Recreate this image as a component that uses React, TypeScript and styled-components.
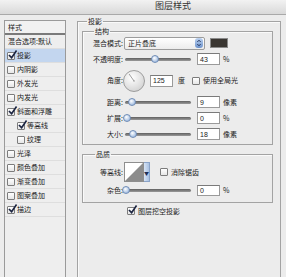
import React from "react";
import styled, { createGlobalStyle } from "styled-components";

const GlobalStyle = createGlobalStyle`
  html, body { margin: 0; padding: 0; background: #ececec; }
  body { font-family: "Noto Sans CJK SC", "Noto Sans", sans-serif; color: #222; }
  * { box-sizing: border-box; }
`;

const Window = styled.div`
  width: 286px;
  height: 277px;
  overflow: hidden;
  background: #ececec;
  display: flex;
  flex-direction: column;
`;

const TitleBar = styled.div`
  height: 15px;
  flex: none;
  display: flex;
  align-items: center;
  justify-content: center;
  padding-left: 60px;
  padding-bottom: 2px;
  font-size: 9px;
  line-height: 10px;
  color: #333;
  background: linear-gradient(#f2f2f2, #d9d9d9);
  border-bottom: 1px solid #a9a9a9;
`;

const Body = styled.div`
  flex: 1;
  display: flex;
  align-items: flex-start;
  padding: 2px 0 0 4px;
`;

const StyleList = styled.div`
  width: 62px;
  height: 270px;
  margin-top: 3px;
  border: 1px solid #9a9a9a;
  background: #eeeeee;
  display: flex;
  flex-direction: column;
`;

const ListHeader = styled.div`
  height: 14px;
  padding-left: 3px;
  font-size: 7px;
  line-height: 12px;
  border-bottom: 2px solid #7a7a7a;
  background: #f1f1f1;
`;

const ListItem = styled.div<{ $selected?: boolean; $indent?: boolean }>`
  height: 14px;
  display: flex;
  align-items: center;
  gap: 2px;
  padding-left: ${(p) => (p.$indent ? 12 : 2)}px;
  font-size: 7px;
  line-height: 9px;
  border-bottom: 1px solid #dedede;
  background: ${(p) => (p.$selected ? "#c3d6ef" : "transparent")};
`;

const BoxOuter = styled.span`
  position: relative;
  width: 8px;
  height: 8px;
  flex: none;
  border: 1px solid #7c7c7c;
  border-radius: 1px;
  background: linear-gradient(#ffffff, #e6e6e6);
`;

const CheckMark = styled.svg`
  position: absolute;
  left: 0px;
  top: -3px;
  width: 9px;
  height: 9px;
  overflow: visible;
`;

const CheckBox: React.FC<{ checked?: boolean }> = ({ checked }) => (
  <BoxOuter>
    {checked && (
      <CheckMark viewBox="0 0 10 10">
        <path d="M1 5.5 L4 8.5 L9.5 0.5" fill="none" stroke="#1b2440" strokeWidth="1.8" />
      </CheckMark>
    )}
  </BoxOuter>
);

const Fieldset = styled.fieldset<{ $w: number; $mt?: number; $pl?: number; $pt?: number; $pb?: number; $h?: number }>`
  width: ${(p) => p.$w}px;
  ${(p) => (p.$h ? `height: ${p.$h}px;` : "")}
  margin: ${(p) => p.$mt ?? 0}px 0 0 0;
  padding: ${(p) => p.$pt ?? 0}px 0 ${(p) => p.$pb ?? 0}px ${(p) => p.$pl ?? 0}px;
  border: 1px solid #a3a3a3;
  box-shadow: inset 1px 1px 0 #fafafa;
  display: flex;
  flex-direction: column;
  flex: none;
`;

const OuterFieldset = styled(Fieldset)`
  margin-left: 11px;
`;

const Legend = styled.legend<{ $ml: number }>`
  margin-left: ${(p) => p.$ml}px;
  padding: 0 1px;
  font-size: 7px;
  line-height: 8px;
  color: #222;
`;

const Row = styled.div<{ $h: number; $mt?: number }>`
  height: ${(p) => p.$h}px;
  margin-top: ${(p) => p.$mt ?? 0}px;
  display: flex;
  align-items: center;
  flex: none;
`;

const Label = styled.span`
  width: 40px;
  flex: none;
  text-align: right;
  font-size: 7px;
  line-height: 9px;
`;

const Text = styled.span<{ $ml?: number }>`
  margin-left: ${(p) => p.$ml ?? 0}px;
  font-size: 7px;
  line-height: 9px;
  white-space: nowrap;
`;

const Select = styled.div`
  width: 81px;
  height: 13px;
  margin-left: 1px;
  display: flex;
  align-items: center;
  justify-content: space-between;
  padding: 0 1px 0 3px;
  border: 1px solid #9c9c9c;
  border-radius: 2px;
  background: linear-gradient(#ffffff, #ececec);
  font-size: 7px;
  line-height: 9px;
`;

const Stepper = styled.svg`
  width: 8px;
  height: 10px;
`;

const Swatch = styled.div`
  width: 18px;
  height: 10px;
  margin-left: 5px;
  background: #3a3632;
  border: 1px solid #8a8a8a;
`;

const Track = styled.div<{ $ml?: number }>`
  position: relative;
  width: 66px;
  height: 3px;
  margin-left: ${(p) => p.$ml ?? 2}px;
  border-radius: 2px;
  background: linear-gradient(#5f5f5f, #9a9a9a);
`;

const Thumb = styled.span`
  position: absolute;
  top: -3px;
  width: 8px;
  height: 8px;
  margin-left: -4px;
  border-radius: 50%;
  border: 1px solid #6f8cb6;
  background: radial-gradient(circle at 40% 35%, #ffffff, #a9c2e4 70%);
`;

const Slider: React.FC<{ pos: number; ml?: number }> = ({ pos, ml }) => (
  <Track $ml={ml}>
    <Thumb style={{ left: pos }} />
  </Track>
);

const NumInput = styled.div<{ $ml?: number; $h?: number }>`
  width: 23px;
  height: ${(p) => p.$h ?? 12}px;
  margin-left: ${(p) => p.$ml ?? 6}px;
  padding-left: 2px;
  display: flex;
  align-items: center;
  border: 1px solid #9a9a9a;
  border-top-color: #7a7a7a;
  background: #ffffff;
  font-family: "Liberation Sans", Arial, sans-serif;
  font-size: 7px;
  line-height: 9px;
`;

const DialSvg = styled.svg`
  width: 22px;
  height: 22px;
  flex: none;
`;

const Dial: React.FC<{ angle: number }> = ({ angle }) => {
  const r = (angle * Math.PI) / 180;
  const x = 11 + Math.cos(r) * 8.5;
  const y = 11 - Math.sin(r) * 8.5;
  return (
    <DialSvg viewBox="0 0 22 22">
      <defs>
        <radialGradient id="dg" cx="40%" cy="35%" r="70%">
          <stop offset="0" stopColor="#ffffff" />
          <stop offset="1" stopColor="#d2d2d2" />
        </radialGradient>
      </defs>
      <circle cx="11" cy="11" r="10.5" fill="url(#dg)" stroke="#8a8a8a" strokeWidth="0.8" />
      <line x1="11" y1="11" x2={x} y2={y} stroke="#777" strokeWidth="0.7" />
      <path d="M10 11 H12 M11 10 V12" stroke="#999" strokeWidth="0.5" />
    </DialSvg>
  );
};

const ContourBox = styled.div`
  display: flex;
  margin-left: 1px;
  height: 20px;
`;

const ContourSvg = styled.svg`
  width: 20px;
  height: 20px;
  border: 1px solid #8e8e8e;
`;

const ContourArrow = styled.div`
  width: 6px;
  height: 20px;
  display: flex;
  align-items: center;
  justify-content: center;
  border: 1px solid #8aa3c8;
  border-left: none;
  background: linear-gradient(90deg, #d7e4f5, #a9c1e2);
  font-size: 5px;
  color: #1f2f55;
`;

const CheckLabel = styled.div<{ $ml?: number; $pl?: number }>`
  display: flex;
  align-items: center;
  gap: 3px;
  margin-left: ${(p) => p.$ml ?? 0}px;
  padding-left: ${(p) => p.$pl ?? 0}px;
`;

const items: { label: string; checked?: boolean; selected?: boolean; indent?: boolean; box?: boolean }[] = [
  { label: "混合选项:默认", box: false },
  { label: "投影", checked: true, selected: true },
  { label: "内阴影" },
  { label: "外发光" },
  { label: "内发光" },
  { label: "斜面和浮雕", checked: true },
  { label: "等高线", checked: true, indent: true },
  { label: "纹理", indent: true },
  { label: "光泽" },
  { label: "颜色叠加" },
  { label: "渐变叠加" },
  { label: "图案叠加" },
  { label: "描边", checked: true },
];

const sliderRows = [
  { label: "距离:", pos: 7, value: "9", unit: "像素" },
  { label: "扩展:", pos: 2, value: "0", unit: "%" },
  { label: "大小:", pos: 8, value: "18", unit: "像素" },
];

export default function App() {
  return (
    <Window>
      <GlobalStyle />
      <TitleBar>图层样式</TitleBar>
      <Body>
        <StyleList>
          <ListHeader>样式</ListHeader>
          {items.map((it) => (
            <ListItem key={it.label} $selected={it.selected} $indent={it.indent}>
              {it.box !== false && <CheckBox checked={it.checked} />}
              <Text $ml={it.box === false ? 1 : 0}>{it.label}</Text>
            </ListItem>
          ))}
        </StyleList>

        <OuterFieldset $w={204} $pl={4} $pt={2} $h={300}>
          <Legend $ml={5}>投影</Legend>

          <Fieldset $w={191} $pb={3}>
            <Legend $ml={11}>结构</Legend>
            <Row $h={14} $mt={1}>
              <Label>混合模式:</Label>
              <Select>
                <span>正片叠底</span>
                <Stepper viewBox="0 0 8 10">
                  <defs>
                    <linearGradient id="sg" x1="0" y1="0" x2="0" y2="1">
                      <stop offset="0" stopColor="#bcd2f0" />
                      <stop offset="1" stopColor="#6c92cc" />
                    </linearGradient>
                  </defs>
                  <rect x="0" y="0" width="8" height="10" rx="3" fill="url(#sg)" />
                  <path d="M2.3 4 L4 2.2 L5.7 4 M2.3 6 L4 7.8 L5.7 6" fill="none" stroke="#1d2d52" strokeWidth="0.9" />
                </Stepper>
              </Select>
              <Swatch />
            </Row>
            <Row $h={14} $mt={2}>
              <Label>不透明度:</Label>
              <Slider pos={30} />
              <NumInput>43</NumInput>
              <Text $ml={3}>%</Text>
            </Row>
            <Row $h={25} $mt={2}>
              <Label>角度:</Label>
              <Dial angle={125} />
              <NumInput $ml={5}>125</NumInput>
              <Text $ml={5}>度</Text>
              <CheckLabel $ml={7}>
                <CheckBox />
                <Text>使用全局光</Text>
              </CheckLabel>
            </Row>
            {sliderRows.map((r) => (
              <Row key={r.label} $h={14} $mt={2}>
                <Label>{r.label}</Label>
                <Slider pos={r.pos} />
                <NumInput>{r.value}</NumInput>
                <Text $ml={3}>{r.unit}</Text>
              </Row>
            ))}
          </Fieldset>

          <Fieldset $w={191} $mt={5} $pb={6}>
            <Legend $ml={12}>品质</Legend>
            <Row $h={20} $mt={4}>
              <Label>等高线:</Label>
              <ContourBox>
                <ContourSvg viewBox="0 0 18 18" preserveAspectRatio="none">
                  <rect width="18" height="18" fill="#ffffff" />
                  <polygon points="0,18 18,0 18,18" fill="#8c8c8c" />
                </ContourSvg>
                <ContourArrow>▼</ContourArrow>
              </ContourBox>
              <CheckLabel $ml={10}>
                <CheckBox />
                <Text>消除锯齿</Text>
              </CheckLabel>
            </Row>
            <Row $h={12} $mt={2}>
              <Label>杂色:</Label>
              <Slider pos={1} />
              <NumInput $h={11}>0</NumInput>
              <Text $ml={3}>%</Text>
            </Row>
          </Fieldset>

          <Row $h={10} $mt={3}>
            <CheckLabel $pl={45}>
              <CheckBox checked />
              <Text>图层挖空投影</Text>
            </CheckLabel>
          </Row>
        </OuterFieldset>
      </Body>
    </Window>
  );
}
